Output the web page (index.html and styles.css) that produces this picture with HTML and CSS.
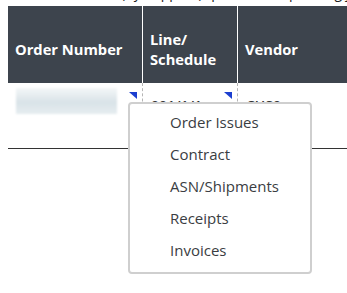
FILE: index.html
```html
<!DOCTYPE html>
<html lang="en">
<head>
    <meta charset="UTF-8">
    <meta name="viewport" content="width=device-width, initial-scale=1.0">
    <title>Order Inquiry</title>
    <link rel="stylesheet" href="styles.css">
</head>
<body>
    <div class="caption">Purchase Orders (by Supplier) quick filters: pending jobs</div>
    <table class="orders">
        <thead>
            <tr>
                <th class="col-order">Order Number</th>
                <th class="col-line">Line/<br>Schedule</th>
                <th class="col-vendor">Vendor</th>
            </tr>
        </thead>
        <tbody>
            <tr>
                <td class="has-menu">
                    <div class="blurred"></div>
                    <span class="corner"></span>
                </td>
                <td class="has-menu">
                    <span class="cell-text">001/1/1</span>
                    <span class="corner"></span>
                </td>
                <td><span class="cell-text">CUS0</span></td>
            </tr>
        </tbody>
    </table>

    <ul class="context-menu">
        <li>Order Issues</li>
        <li>Contract</li>
        <li>ASN/Shipments</li>
        <li>Receipts</li>
        <li>Invoices</li>
    </ul>
</body>
</html>
```

FILE: styles.css
```css
html, body {
    margin: 0;
    height: 100%;
    overflow: hidden;
}
body {
    font-family: "Open Sans", "Noto Sans", sans-serif;
    background: #fff;
    padding: 0 0 0 8px;
    position: relative;
}
.caption {
    font-size: 14px;
    line-height: 18px;
    height: 18px;
    margin-top: -16px;
    margin-bottom: 4px;
    color: #222;
    white-space: nowrap;
}
.orders {
    border-collapse: collapse;
    width: 420px;
    table-layout: fixed;
}
.orders th {
    background: #3d444d;
    color: #fff;
    font-weight: 700;
    font-size: 14.7px;
    line-height: 20px;
    text-align: left;
    padding: 9px 7px 0;
    height: 68px;
    border-left: 1px solid #fff;
}
.orders th:first-child {
    border-left: none;
}
.col-order { width: 120px; }
.col-line { width: 80px; }
.orders td {
    height: 60px;
    vertical-align: top;
    padding: 5px 8px 0;
    border-left: 1px dashed #b5b5b5;
    border-bottom: 1px solid #333;
    position: relative;
    font-size: 14px;
    color: #333;
}
.orders td:first-child {
    border-left: none;
}
.blurred {
    width: 101px;
    height: 26px;
    background: linear-gradient(180deg, #f4f7f8 0%, #d9e3e8 55%, #e6edf0 100%);
    filter: blur(1px);
}
.cell-text {
    display: block;
    margin-top: 8px;
    font-weight: 600;
}
.corner {
    position: absolute;
    top: 9px;
    right: 5px;
    width: 0;
    height: 0;
    border-top: 7px solid #1c3fd0;
    border-left: 8px solid transparent;
}
.context-menu {
    position: absolute;
    left: 128px;
    top: 102px;
    width: 180px;
    height: 165px;
    margin: 0;
    padding: 3px 0 0;
    list-style: none;
    background: #fff;
    border: 2px solid #cfcfcf;
    border-radius: 4px;
}
.context-menu li {
    font-size: 15px;
    line-height: 20px;
    padding: 5px 0 7px 40px;
    color: #3a3d42;
}
```
